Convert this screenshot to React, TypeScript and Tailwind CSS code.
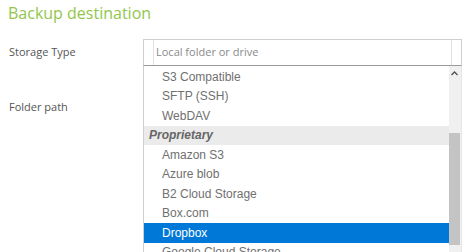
const OPTIONS: { label: string; kind?: 'group' | 'selected' }[] = [
  { label: 'S3 Compatible' },
  { label: 'SFTP (SSH)' },
  { label: 'WebDAV' },
  { label: 'Proprietary', kind: 'group' },
  { label: 'Amazon S3' },
  { label: 'Azure blob' },
  { label: 'B2 Cloud Storage' },
  { label: 'Box.com' },
  { label: 'Dropbox', kind: 'selected' },
  { label: 'Google Cloud Storage' },
];

function OptionRow({ label, kind }: { label: string; kind?: 'group' | 'selected' }) {
  if (kind === 'group') {
    return (
      <div className="h-[19.5px] flex items-center pl-[5px] bg-[#ebebeb] text-[#666] font-bold italic">
        {label}
      </div>
    );
  }
  return (
    <div
      className={
        kind === 'selected'
          ? 'h-[19.5px] flex items-center pl-[18px] bg-[#0078d7] text-white'
          : 'h-[19.5px] flex items-center pl-[18px] text-[#707070]'
      }
    >
      {label}
    </div>
  );
}

export default function App() {
  return (
    <div className="w-[474px] h-[252px] bg-white overflow-hidden font-['Open_Sans',sans-serif]">
      <h2 className="pl-2 h-[24px] leading-[26px] text-[16px] text-[#92c64c]">Backup destination</h2>

      <div className="mt-[15px] flex h-[27px] items-center">
        <div className="w-[143px] pl-[9px] text-[11px] text-[#555]">Storage Type</div>
        <div className="relative w-[319px] h-[27px]">
          <div className="flex h-full border border-[#cfcfcf] border-b-[#9a9a9a]">
            <div className="w-[10px] border-r border-[#e2e2e2]" />
            <div className="flex-1 flex items-center pl-[2px] text-[11px] text-[#8a8a8a]">
              Local folder or drive
            </div>
            <div className="w-[10px] border-l border-[#e2e2e2]" />
          </div>

          {/* open native-style dropdown, overlays the form below */}
          <div className="absolute left-0 top-full w-[319px] h-[200px] flex border-x border-[#cfcfcf] border-r-[#e6e6e6] bg-white font-['Liberation_Sans',Arial,sans-serif] text-[12px] z-10">
            <div className="flex-1 pt-px overflow-hidden">
              {OPTIONS.map(o => (
                <OptionRow key={o.label} label={o.label} kind={o.kind} />
              ))}
            </div>
            <div className="w-[12px] bg-[#f0f0f0] flex flex-col items-center">
              <svg width="7" height="5" viewBox="0 0 7 5" className="mt-[5px] mr-px">
                <path d="M0.5 4 L3.5 1 L6.5 4" fill="none" stroke="#505050" strokeWidth="1.3" />
              </svg>
              <div className="mt-[57px] w-[11px] mr-px h-[112px] bg-[#c4c4c4]" />
            </div>
          </div>
        </div>
      </div>

      <div className="mt-[33px] h-[16px] leading-[16px] pl-[9px] text-[11px] text-[#555]">Folder path</div>
    </div>
  );
}
